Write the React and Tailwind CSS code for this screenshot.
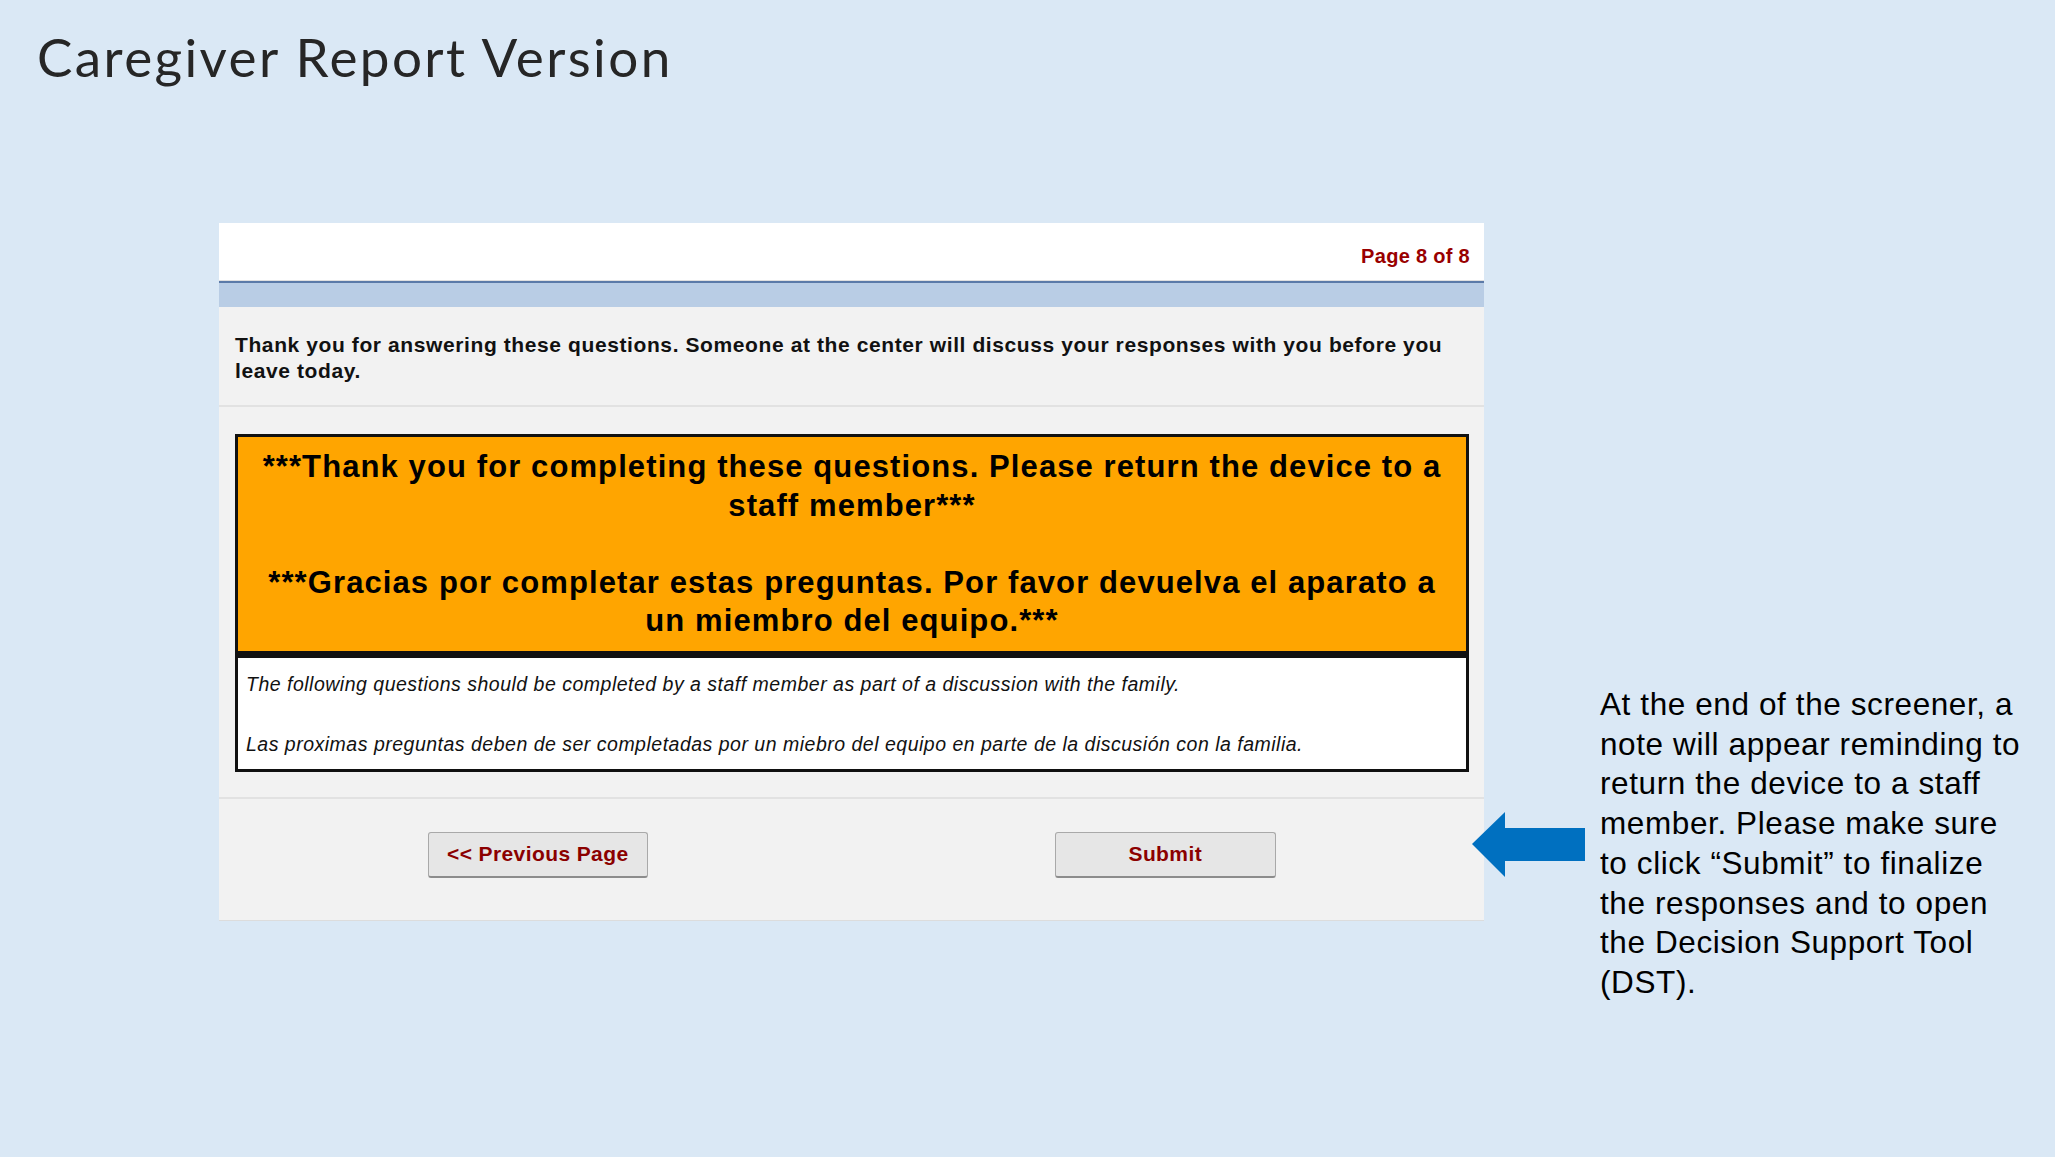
export default function App() {
  return (
    <div className="w-[2055px] h-[1157px] bg-[#dae8f5] overflow-hidden">
      <div className="pl-[37px] pt-[24px] h-[223px]">
        <h1 className="text-[53px] leading-[66px] text-[#262626] tracking-[2.4px]" style={{ fontFamily: "Lato, 'Open Sans', sans-serif" }}>
          Caregiver Report Version
        </h1>
      </div>
      <div className="flex items-start" style={{ fontFamily: "'Liberation Sans', Arial, sans-serif" }}>
        <div className="ml-[219px] w-[1265px] bg-[#f2f2f2] border-b border-[#dcdcdc]">
          <div className="h-[58px] bg-white flex items-center justify-end pr-[14px] border-b border-[#e0e0e0]">
            <span className="text-[20px] tracking-[0.3px] font-bold text-[#990000] mt-[8px]">Page 8 of 8</span>
          </div>
          <div className="h-[2px] bg-[#5b7aa8]"></div>
          <div className="h-[24px] bg-[#b9cde5]"></div>
          <div className="h-[100px] pl-[16px] pr-[20px] pt-[25px] border-b-2 border-[#e2e2e2]">
            <p className="text-[21px] leading-[26px] tracking-[0.6px] font-bold text-[#111]">
              Thank you for answering these questions. Someone at the center will discuss your responses with you before you leave today.
            </p>
          </div>
          <div className="pt-[27px] pb-[25px] pl-[16px] pr-[15px] border-b-2 border-[#e2e2e2]">
            <div className="border-[3px] border-b-[7px] border-[#111] bg-[#ffa500] pt-[11px] pb-[10px] text-center">
              <p className="text-[31px] leading-[38.5px] tracking-[1.1px] font-bold text-black px-[10px]">
                ***Thank you for completing these questions. Please return the device to a staff member***
                <br />
                <br />
                ***Gracias por completar estas preguntas. Por favor devuelva el aparato a un miembro del equipo.***
              </p>
            </div>
            <div className="border-[3px] border-t-0 border-[#111] bg-white pl-[8px] pt-[11px] pb-[10px]">
              <p className="text-[19.5px] leading-[30px] tracking-[0.5px] italic text-[#111]">
                The following questions should be completed by a staff member as part of a discussion with the family.
                <br />
                <br />
                Las proximas preguntas deben de ser completadas por un miebro del equipo en parte de la discusión con la familia.
              </p>
            </div>
          </div>
          <div className="grid grid-cols-2 h-[121px] items-start pt-[33px]">
            <div className="flex justify-center pl-[5px]">
              <button className="w-[220px] h-[46px] bg-[#e6e6e6] border border-[#a9a9a9] border-b-2 border-b-[#8c8c8c] rounded-[3px] text-[21px] tracking-[0.4px] font-bold text-[#8b0000]">
                &lt;&lt; Previous Page
              </button>
            </div>
            <div className="flex justify-center pr-[5px]">
              <button className="w-[221px] h-[46px] bg-[#e6e6e6] border border-[#a9a9a9] border-b-2 border-b-[#8c8c8c] rounded-[3px] text-[21px] tracking-[0.4px] font-bold text-[#8b0000]">
                Submit
              </button>
            </div>
          </div>
        </div>
        <div className="relative flex-1 pl-[116px] pt-[462px]">
          <svg className="absolute left-[-12px] top-[589px]" width="114" height="66" viewBox="0 0 114 66">
            <polygon points="0,32 33,0 33,16 113,16 113,49 33,49 33,65" fill="#0070c0" />
          </svg>
          <p className="text-[31.5px] leading-[39.7px] tracking-[0.6px] text-black whitespace-nowrap">
            At the end of the screener, a<br />
            note will appear reminding to<br />
            return the device to a staff<br />
            member. Please make sure<br />
            to click “Submit” to finalize<br />
            the responses and to open<br />
            the Decision Support Tool<br />
            (DST).
          </p>
        </div>
      </div>
    </div>
  );
}
